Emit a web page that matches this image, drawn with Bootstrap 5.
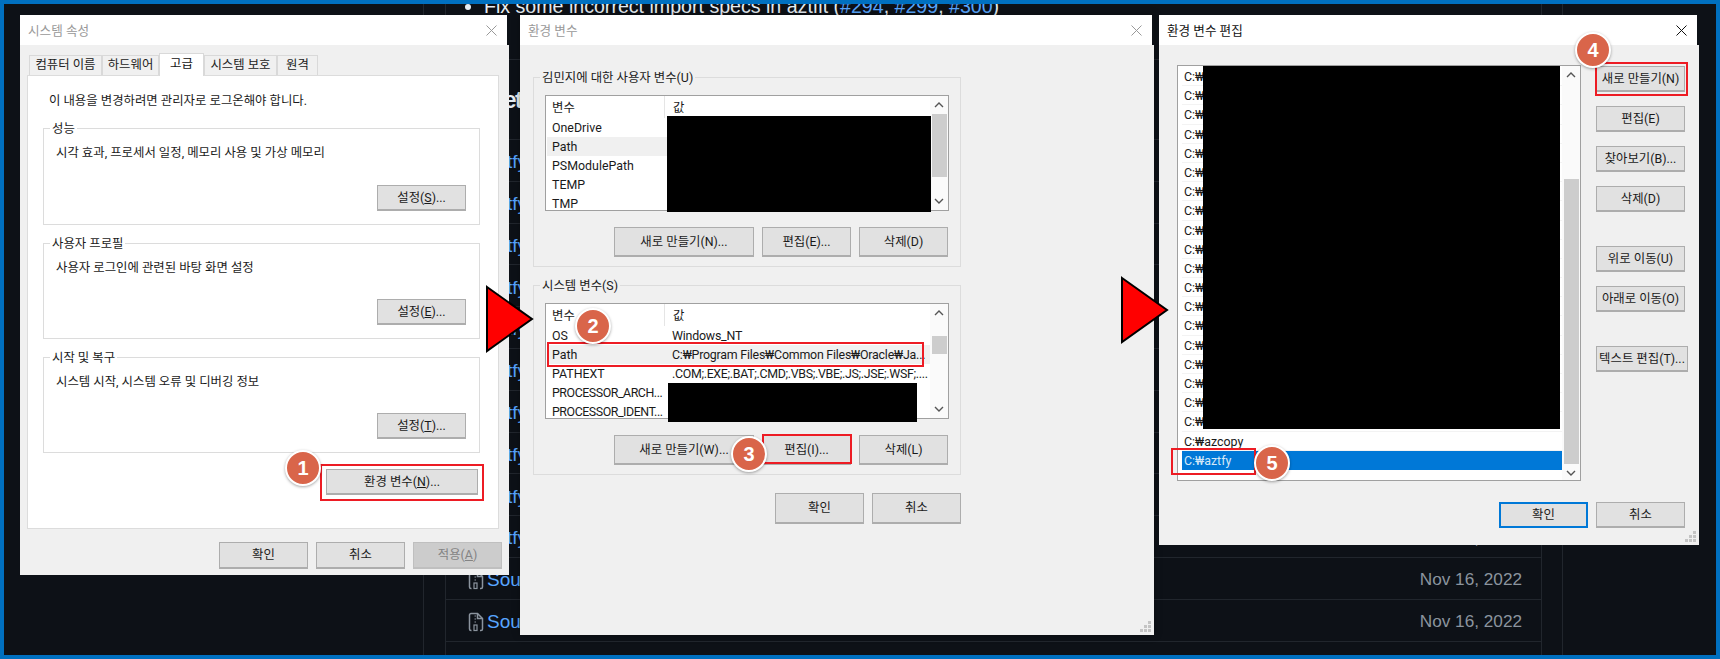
<!DOCTYPE html>
<html lang="ko">
<head>
    <meta charset="UTF-8">
    <meta name="viewport" content="width=device-width, initial-scale=1.0">
    <title>환경 변수 설정</title>
    <link rel="stylesheet" href="https://cdn.jsdelivr.net/npm/bootstrap@5.3.0/dist/css/bootstrap.min.css">
    <style>
        html, body { margin: 0; background: #0d1117; }
        .shot { position: relative; width: 1720px; height: 659px; border: 4px solid #0070c0; background: #0d1117; overflow: hidden; }

        /* github release page behind the dialogs */
        .gh-outer { margin-left: 419px; width: 1140px; height: 651px; border-left: 1px solid #21262d; border-right: 1px solid #21262d; font-family: "Liberation Sans", sans-serif; }
        .gh-inner { margin-left: 21px; width: 1097px; height: 651px; border-left: 1px solid #21262d; border-right: 1px solid #21262d; }
        .gh-notes { display: flow-root; height: 56px; margin: 0; padding: 0; border-bottom: 1px solid #21262d; }
        .gh-notes ul { margin: -13px 0 0; padding-left: 38px; font-size: 19.6px; line-height: 30px; color: #e6edf3; white-space: nowrap; }
        .gh-notes a, .gh-link { color: #58a6ff; text-decoration: none; }
        .gh-head { height: 79px; padding: 25px 0 0 20px; margin: 0; font-size: 23px; letter-spacing: -1.5px; line-height: 30px; font-weight: 700; color: #e6edf3; font-family: "Liberation Sans", sans-serif; }
        .gh-row { height: 41.8px; border-top: 1px solid #21262d; padding: 4px 19px 0 22px; font-size: 19px; white-space: nowrap; }
        .gh-date { color: #8b949e; font-size: 17.2px; }
        .zip-ico { width: 16px; height: 20px; margin-right: 3px; flex: none; }

        /* dialogs */
        .dlg { position: absolute; display: flex; flex-direction: column; font-family: Roboto, "Noto Sans CJK KR", sans-serif; font-size: 12.4px; color: #1a1a1a; }
        #dlgSys { left: 16px; top: 11px; width: 489px; height: 560px; }
        #dlgEnv { left: 516px; top: 11px; width: 634px; height: 620px; box-shadow: 0 0 8px rgba(0,0,0,.3); }
        #dlgEdit { left: 1155px; top: 11px; width: 540px; height: 530px; }
        .dlg-title { height: 30px; flex: none; margin-right: 2px; background: #fff; color: #999; padding-left: 8px; line-height: 31px; font-size: 12.6px; }
        .dlg-title.on { color: #111; }
        .dlg-close { width: 11px; height: 11px; margin-right: 10px; }
        .dlg-body { flex: 1; position: relative; background: #f0f0f0; }
        .win-btn { display: block; flex: none; padding: 0; height: 26px; width: 89px; border: 2px solid #adadad; border-width: 1px 1px 2px 1px; border-radius: 0; background: #e1e1e1; color: #1a1a1a; font-size: 12.4px; line-height: 22px; white-space: nowrap; }
        .win-btn.off, .win-btn.off:disabled { background: #cccccc; border-color: #bfbfbf; color: #838383; opacity: 1; }
        .win-btn.def { border: 2px solid #0078d7; }
        .grip { position: absolute; right: 2px; bottom: 2px; width: 12px; height: 12px; }

        .sys-tabs { margin: 8px 0 0 9px; height: 22px; border: 0; align-items: flex-end; }
        .sys-tabs .nav-link { height: 20px; padding: 0; text-align: center; margin: 0; color: #222; font-size: 12.4px; line-height: 18px; border: 1px solid #d9d9d9; border-bottom: 0; border-radius: 0; background: #f0f0f0; }
        .sys-tabs .nav-link.active { position: relative; z-index: 2; height: 23px; margin: 0 0 -1px 0; background: #fff; color: #111; border-color: #d9d9d9; line-height: 19px; }
        .tab-a { width: 73px; }
        .tab-b { width: 57px; }
        .tab-c { width: 45px; }
        .tab-d { width: 73px; }
        .tab-e { width: 41px; }
        .sys-panel { margin-left: 7px; width: 472px; height: 454px; background: #fff; border: 1px solid #dcdcdc; padding: 16px 19px 0 15px; }
        .sys-intro { line-height: 18px; padding-left: 6px; margin: 0 0 18px; }
        .grp { position: relative; border: 1px solid #dcdcdc; }
        .grp-name { position: absolute; top: -9px; left: 6px; padding: 0 2px; line-height: 18px; }
        .sys-grp { height: 96px; width: 437px; padding: 15px 13px 13px 12px; margin-bottom: 18px; }
        .sys-grp.first { height: 97px; }
        .sys-grp .grp-name { background: #fff; }
        .sys-grp p { margin: 0; line-height: 18px; }
        .sys-env { width: 152px; margin: 16px 0 0 283px; }
        .sys-foot { margin: 13px 7px 0 0; }
        .sys-foot .win-btn { height: 27px; }

        .env-grp { height: 190px; width: 428px; margin-left: 13px; padding: 17px 12px 0 11px; margin-bottom: 18px; }
        .env-grp .grp-name { background: #f0f0f0; }
        .env-btn { height: 30px; }
        .w-new { width: 140px; }
        .env-foot { width: 428px; margin-left: 13px; }
        .env-foot .win-btn { height: 31px; }

        .lv { position: relative; display: flex; width: 404px; height: 116px; background: #fff; border: 1px solid #a0a0a0; }
        .lv-main { flex: 1; overflow: hidden; min-width: 0; }
        .lv-row { display: flex; height: 19px; line-height: 20px; white-space: nowrap; overflow: hidden; margin-left: 1px; }
        .lv-row.head { height: 22px; line-height: 23px; }
        .lv-row.sel { background: #f0f0f0; }
        .lv-name { width: 117px; flex: none; padding-left: 5px; overflow: hidden; }
        .lv-name.tight { letter-spacing: -.45px; }
        .lv-val { padding-left: 8px; flex: 1; overflow: hidden; letter-spacing: -.22px; }
        .lv-val.tight { letter-spacing: -.32px; }
        .head .lv-val { border-left: 1px solid #e5e5e5; }
        .sbar { width: 18px; flex: none; display: flex; flex-direction: column; align-items: center; background: #fafafa; }
        .sbar svg { width: 10px; height: 6px; flex: none; margin: 6px 0; }
        .sbar-track { flex: 1; width: 15px; }
        .sbar-thumb { background: #cdcdcd; width: 15px; }
        #thumbUser { margin-top: 0; height: 63px; }
        #thumbSys { margin-top: 14px; height: 18px; }
        #thumbPath { margin-top: 95px; height: 285px; }
        .blackout { position: absolute; background: #000; }
        #blackUser { left: 121px; top: 20px; width: 264px; height: 96px; }
        #blackSys { left: 122px; top: 79px; width: 249px; height: 39px; }
        #blackPath { left: 25px; top: 0; width: 357px; height: 363px; }

        .edit-wrap { margin: 20px 0 0 18px; }
        #lvPath { height: 416px; }
        #lvPath .lv-main { padding-top: 1px; }
        .path-row { height: 19.2px; line-height: 20px; margin-left: 4px; padding-left: 2px; border-bottom: 1px solid #f3f3f3; }
        .path-row.pick { background: #0078d7; color: #d5e8f8; border-bottom: 0; }
        .edit-side { margin: 1px 0 0 15px; gap: 14px; }
        .edit-side .gap-big { margin-top: 20px; }
        .w-txt { width: 92px; }
        .edit-foot { margin: 21px 14px 0 0; }

        /* annotations drawn over the dialogs */
        .anno-box { position: absolute; border: 2px solid #ed1c24; z-index: 5; }
        #box1 { left: 316px; top: 460px; width: 164px; height: 37px; }
        #box2 { left: 543px; top: 338px; width: 377px; height: 25px; }
        #box3 { left: 758px; top: 430px; width: 90px; height: 30px; }
        #box4 { left: 1591px; top: 58px; width: 93px; height: 34px; }
        #box5 { left: 1167px; top: 444px; width: 85px; height: 27px; }
        .anno-num { position: absolute; z-index: 7; width: 36px; height: 36px; border-radius: 50%; background: #d9654a; border: 2px solid #fff; box-shadow: 0 1px 3px rgba(0,0,0,.35); color: #fff; font: 700 20px/32px "Liberation Sans", sans-serif; text-align: center; }
        #num1 { left: 281px; top: 446px; }
        #num2 { left: 571px; top: 304px; }
        #num3 { left: 727px; top: 432px; }
        #num4 { left: 1571px; top: 28px; }
        #num5 { left: 1250px; top: 441px; }
        .anno-arrow { position: absolute; z-index: 6; width: 50px; height: 68px; }
        #arrow1 { left: 481px; top: 281px; }
        #arrow2 { left: 1116px; top: 272px; }
    </style>
</head>
<body>

<div class="shot">

    <div class="gh-outer">
        <div class="gh-inner">
            <div class="gh-notes">
                <ul>
                    <li>Fix some incorrect import specs in aztfit (<a href="#">#294</a>, <a href="#">#299</a>, <a href="#">#300</a>)</li>
                </ul>
            </div>
            <h3 class="gh-head">Assets</h3>
            <div id="ghRows"></div>
        </div>
    </div>

    <!-- system properties -->
    <div class="dlg" id="dlgSys">
        <div class="dlg-title d-flex justify-content-between align-items-center">
            <span>시스템 속성</span>
            <svg class="dlg-close" viewBox="0 0 11 11"><path d="M.5.5l10 10M10.5.5l-10 10" stroke="#999" fill="none"/></svg>
        </div>
        <div class="dlg-body">
            <ul class="nav nav-tabs sys-tabs">
                <li class="nav-item"><a class="nav-link tab-a" href="#">컴퓨터 이름</a></li>
                <li class="nav-item"><a class="nav-link tab-b" href="#">하드웨어</a></li>
                <li class="nav-item"><a class="nav-link tab-c active" href="#">고급</a></li>
                <li class="nav-item"><a class="nav-link tab-d" href="#">시스템 보호</a></li>
                <li class="nav-item"><a class="nav-link tab-e" href="#">원격</a></li>
            </ul>
            <div class="sys-panel">
                <p class="sys-intro">이 내용을 변경하려면 관리자로 로그온해야 합니다.</p>
                <div class="grp sys-grp first d-flex flex-column">
                    <span class="grp-name">성능</span>
                    <p>시각 효과, 프로세서 일정, 메모리 사용 및 가상 메모리</p>
                    <button class="btn win-btn mt-auto align-self-end">설정(<u>S</u>)...</button>
                </div>
                <div class="grp sys-grp d-flex flex-column">
                    <span class="grp-name">사용자 프로필</span>
                    <p>사용자 로그인에 관련된 바탕 화면 설정</p>
                    <button class="btn win-btn mt-auto align-self-end">설정(<u>E</u>)...</button>
                </div>
                <div class="grp sys-grp d-flex flex-column mb-0">
                    <span class="grp-name">시작 및 복구</span>
                    <p>시스템 시작, 시스템 오류 및 디버깅 정보</p>
                    <button class="btn win-btn mt-auto align-self-end">설정(<u>T</u>)...</button>
                </div>
                <button class="btn win-btn sys-env">환경 변수(<u>N</u>)...</button>
            </div>
            <div class="sys-foot d-flex justify-content-end gap-2">
                <button class="btn win-btn">확인</button>
                <button class="btn win-btn">취소</button>
                <button class="btn win-btn off" disabled>적용(<u>A</u>)</button>
            </div>
        </div>
    </div>

    <!-- environment variables -->
    <div class="dlg" id="dlgEnv">
        <div class="dlg-title d-flex justify-content-between align-items-center">
            <span>환경 변수</span>
            <svg class="dlg-close" viewBox="0 0 11 11"><path d="M.5.5l10 10M10.5.5l-10 10" stroke="#999" fill="none"/></svg>
        </div>
        <div class="dlg-body pt-4">
            <div class="grp env-grp mt-2">
                <span class="grp-name">김민지에 대한 사용자 변수(U)</span>
                <div class="lv">
                    <div class="lv-main">
                        <div class="lv-row head"><div class="lv-name">변수</div><div class="lv-val">값</div></div>
                        <div class="lv-row"><div class="lv-name">OneDrive</div></div>
                        <div class="lv-row sel"><div class="lv-name">Path</div></div>
                        <div class="lv-row"><div class="lv-name">PSModulePath</div></div>
                        <div class="lv-row"><div class="lv-name">TEMP</div></div>
                        <div class="lv-row"><div class="lv-name">TMP</div></div>
                    </div>
                    <div class="sbar">
                        <svg viewBox="0 0 10 6"><path d="M1 5l4-4 4 4" stroke="#555" stroke-width="1.4" fill="none"/></svg>
                        <div class="sbar-track"><div class="sbar-thumb" id="thumbUser"></div></div>
                        <svg viewBox="0 0 10 6"><path d="M1 1l4 4 4-4" stroke="#555" stroke-width="1.4" fill="none"/></svg>
                    </div>
                    <div class="blackout" id="blackUser"></div>
                </div>
                <div class="d-flex justify-content-end gap-2 mt-3 me-0">
                    <button class="btn win-btn env-btn w-new">새로 만들기(N)...</button>
                    <button class="btn win-btn env-btn">편집(E)...</button>
                    <button class="btn win-btn env-btn">삭제(D)</button>
                </div>
            </div>
            <div class="grp env-grp">
                <span class="grp-name">시스템 변수(S)</span>
                <div class="lv">
                    <div class="lv-main">
                        <div class="lv-row head"><div class="lv-name">변수</div><div class="lv-val">값</div></div>
                        <div class="lv-row"><div class="lv-name">OS</div><div class="lv-val">Windows_NT</div></div>
                        <div class="lv-row sel"><div class="lv-name">Path</div><div class="lv-val">C:₩Program Files₩Common Files₩Oracle₩Ja...</div></div>
                        <div class="lv-row"><div class="lv-name">PATHEXT</div><div class="lv-val tight">.COM;.EXE;.BAT;.CMD;.VBS;.VBE;.JS;.JSE;.WSF;....</div></div>
                        <div class="lv-row"><div class="lv-name tight">PROCESSOR_ARCH...</div></div>
                        <div class="lv-row"><div class="lv-name tight">PROCESSOR_IDENT...</div></div>
                    </div>
                    <div class="sbar">
                        <svg viewBox="0 0 10 6"><path d="M1 5l4-4 4 4" stroke="#555" stroke-width="1.4" fill="none"/></svg>
                        <div class="sbar-track"><div class="sbar-thumb" id="thumbSys"></div></div>
                        <svg viewBox="0 0 10 6"><path d="M1 1l4 4 4-4" stroke="#555" stroke-width="1.4" fill="none"/></svg>
                    </div>
                    <div class="blackout" id="blackSys"></div>
                </div>
                <div class="d-flex justify-content-end gap-2 mt-3">
                    <button class="btn win-btn env-btn w-new">새로 만들기(W)...</button>
                    <button class="btn win-btn env-btn">편집(I)...</button>
                    <button class="btn win-btn env-btn">삭제(L)</button>
                </div>
            </div>
            <div class="env-foot d-flex justify-content-end gap-2">
                <button class="btn win-btn env-btn">확인</button>
                <button class="btn win-btn env-btn">취소</button>
            </div>
            <svg class="grip" viewBox="0 0 12 12"><path d="M8 0h3v3H8zM4 4h3v3H4zM8 4h3v3H8zM0 8h3v3H0zM4 8h3v3H4zM8 8h3v3H8z" fill="#c4c4c4"/></svg>
        </div>
    </div>

    <!-- edit path -->
    <div class="dlg" id="dlgEdit">
        <div class="dlg-title on d-flex justify-content-between align-items-center">
            <span>환경 변수 편집</span>
            <svg class="dlg-close" viewBox="0 0 11 11"><path d="M.5.5l10 10M10.5.5l-10 10" stroke="#111" fill="none"/></svg>
        </div>
        <div class="dlg-body">
            <div class="edit-wrap d-flex">
                <div class="lv" id="lvPath">
                    <div class="lv-main" id="pathRows"></div>
                    <div class="sbar">
                        <svg viewBox="0 0 10 6"><path d="M1 5l4-4 4 4" stroke="#555" stroke-width="1.4" fill="none"/></svg>
                        <div class="sbar-track"><div class="sbar-thumb" id="thumbPath"></div></div>
                        <svg viewBox="0 0 10 6"><path d="M1 1l4 4 4-4" stroke="#555" stroke-width="1.4" fill="none"/></svg>
                    </div>
                    <div class="blackout" id="blackPath"></div>
                </div>
                <div class="edit-side d-flex flex-column">
                    <button class="btn win-btn">새로 만들기(N)</button>
                    <button class="btn win-btn">편집(E)</button>
                    <button class="btn win-btn">찾아보기(B)...</button>
                    <button class="btn win-btn">삭제(D)</button>
                    <button class="btn win-btn gap-big">위로 이동(U)</button>
                    <button class="btn win-btn">아래로 이동(O)</button>
                    <button class="btn win-btn gap-big w-txt">텍스트 편집(T)...</button>
                </div>
            </div>
            <div class="edit-foot d-flex justify-content-end gap-2">
                <button class="btn win-btn def">확인</button>
                <button class="btn win-btn">취소</button>
            </div>
            <svg class="grip" viewBox="0 0 12 12"><path d="M8 0h3v3H8zM4 4h3v3H4zM8 4h3v3H8zM0 8h3v3H0zM4 8h3v3H4zM8 8h3v3H8z" fill="#c4c4c4"/></svg>
        </div>
    </div>

    <svg class="anno-arrow" id="arrow1" viewBox="0 0 50 68"><polygon points="2,2 47,34 2,66" fill="#f00" stroke="#000" stroke-width="2"/></svg>
    <svg class="anno-arrow" id="arrow2" viewBox="0 0 50 68"><polygon points="2,2 47,34 2,66" fill="#f00" stroke="#000" stroke-width="2"/></svg>

    <div class="anno-box" id="box1"></div>
    <div class="anno-box" id="box2"></div>
    <div class="anno-box" id="box3"></div>
    <div class="anno-box" id="box4"></div>
    <div class="anno-box" id="box5"></div>
    <div class="anno-num" id="num1">1</div>
    <div class="anno-num" id="num2">2</div>
    <div class="anno-num" id="num3">3</div>
    <div class="anno-num" id="num4">4</div>
    <div class="anno-num" id="num5">5</div>
</div>

<script src="https://cdn.jsdelivr.net/npm/bootstrap@5.3.0/dist/js/bootstrap.bundle.min.js"></script>
<script>
    const zipIcon = `<svg class="zip-ico" viewBox="0 0 16 20" fill="none" stroke="#8b949e" stroke-width="1.5"><path d="M3.5 18.5H3A1.5 1.5 0 0 1 1.5 17V3A1.5 1.5 0 0 1 3 1.5h6.5l5 5V17a1.5 1.5 0 0 1-1.5 1.5h-1"/><path d="M9.5 1.5v5h5"/><path d="M6.5 4h1.5M6.5 7h1.5M6.5 10h1.5" stroke-width="1.2"/><rect x="6" y="13" width="3" height="5.5" stroke-width="1.2"/></svg>`;

    const assets = ["aztfy_v0.9.0_darwin_amd64.zip", "aztfy_v0.9.0_darwin_arm64.zip", "aztfy_v0.9.0_freebsd_386.zip", "aztfy_v0.9.0_freebsd_amd64.zip", "aztfy_v0.9.0_linux_386.zip", "aztfy_v0.9.0_linux_amd64.zip", "aztfy_v0.9.0_linux_arm64.zip", "aztfy_v0.9.0_windows_386.zip", "aztfy_v0.9.0_windows_amd64.zip", "aztfy_v0.9.0_SHA256SUMS", "Source code (zip)", "Source code (tar.gz)"];
    document.getElementById("ghRows").innerHTML = assets.map(name =>
        `<div class="gh-row d-flex align-items-center">${zipIcon}<a class="gh-link" href="#">${name}</a><span class="gh-date ms-auto">Nov 16, 2022</span></div>`
    ).join('') + `<div class="gh-row"></div>`;

    let pathRows = '';
    for (let i = 0; i < 19; i++) {
        pathRows += `<div class="path-row">C:₩</div>`;
    }
    pathRows += `<div class="path-row">C:₩azcopy</div><div class="path-row pick">C:₩aztfy</div>`;
    document.getElementById("pathRows").innerHTML = pathRows;
</script>

</body>
</html>
